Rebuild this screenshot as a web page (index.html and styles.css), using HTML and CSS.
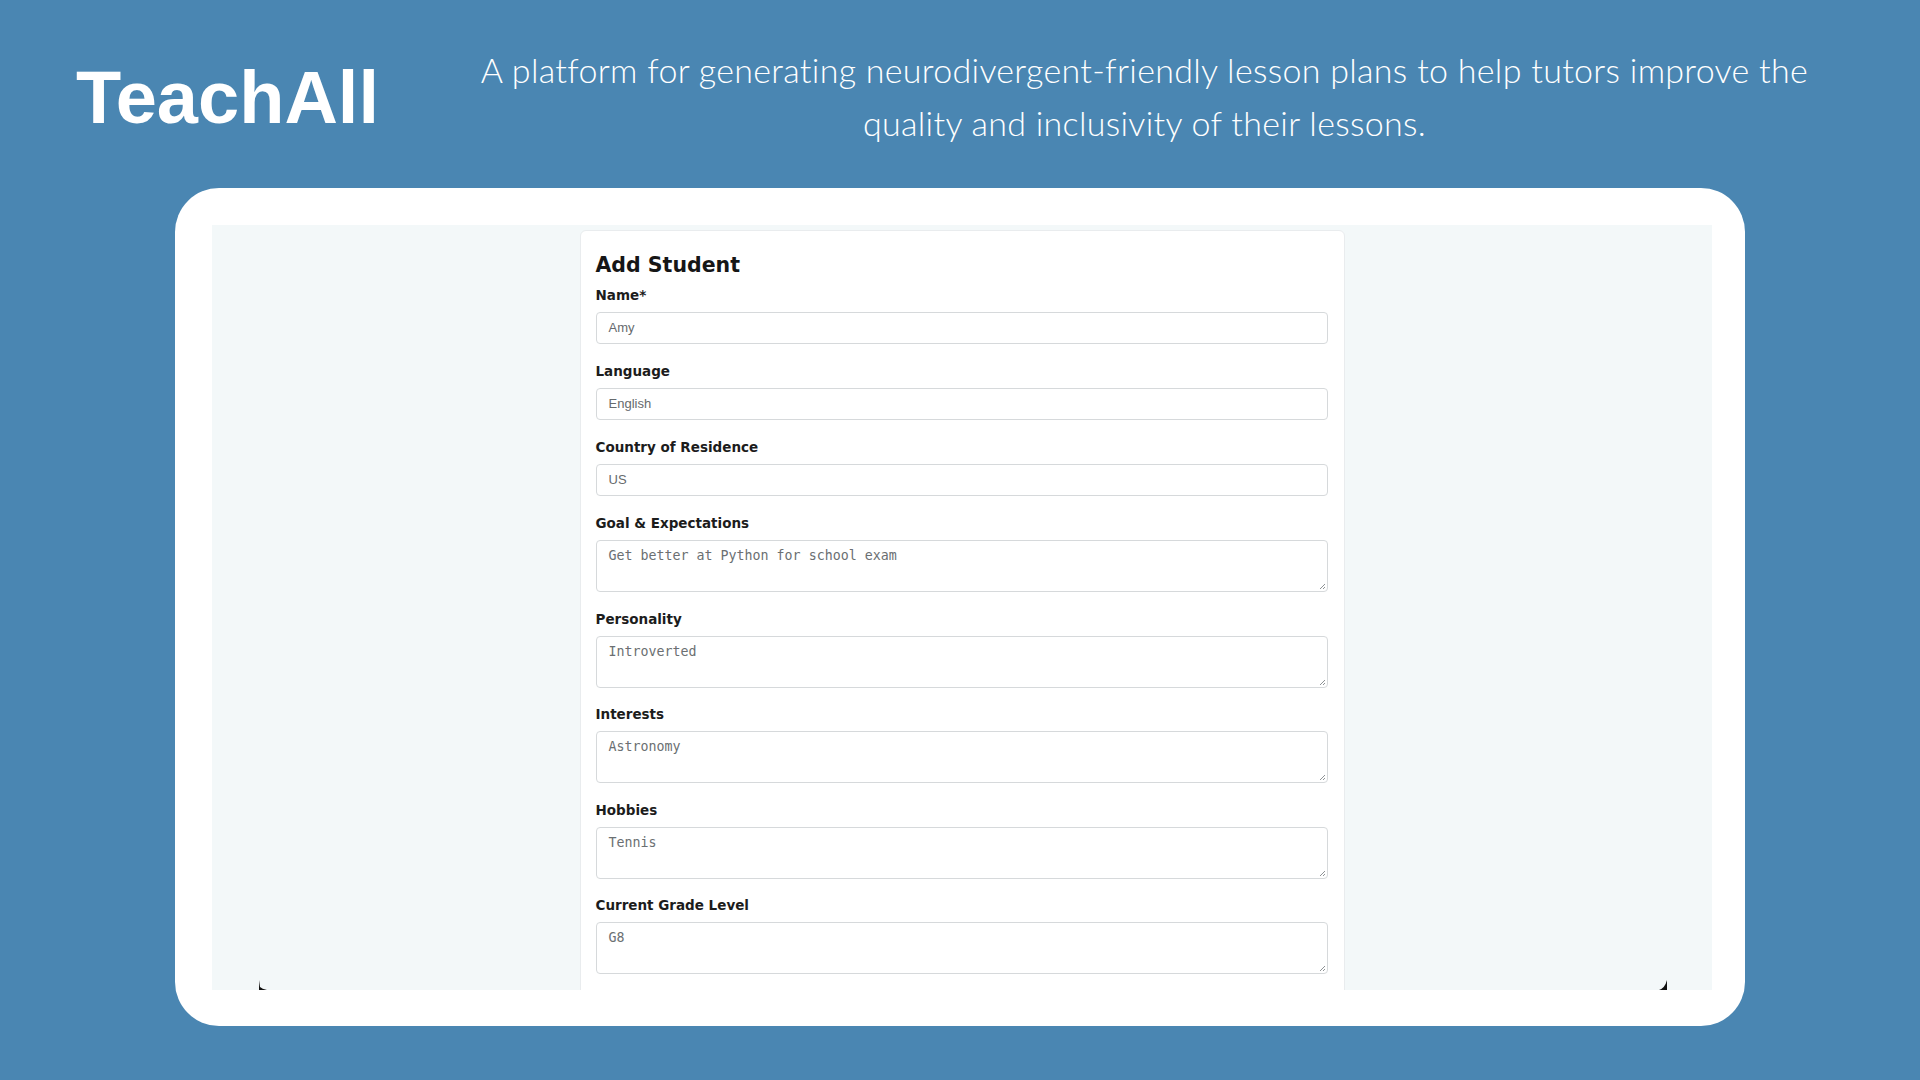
FILE: index.html
```html
<!DOCTYPE html>
<html lang="en">
<head>
<meta charset="utf-8">
<title>TeachAll</title>
<link rel="stylesheet" href="styles.css">
</head>
<body>
<header class="hero">
  <h1 class="brand">TeachAll</h1>
  <p class="tagline">A platform for generating neurodivergent-friendly lesson plans to help tutors improve the<br>quality and inclusivity of their lessons.</p>
</header>
<main class="card">
  <div class="screen">
    <section class="panel">
      <h2 class="panel-title">Add Student</h2>
      <div class="field">
        <div class="label">Name*</div>
        <div class="input">Amy</div>
      </div>
      <div class="field">
        <div class="label">Language</div>
        <div class="input">English</div>
      </div>
      <div class="field">
        <div class="label">Country of Residence</div>
        <div class="input">US</div>
      </div>
      <div class="field">
        <div class="label">Goal &amp; Expectations</div>
        <div class="textarea">Get better at Python for school exam<svg class="grip" viewBox="0 0 8 8"><path d="M7 2L2 7M7 5L5 7"/></svg></div>
      </div>
      <div class="field">
        <div class="label">Personality</div>
        <div class="textarea">Introverted<svg class="grip" viewBox="0 0 8 8"><path d="M7 2L2 7M7 5L5 7"/></svg></div>
      </div>
      <div class="field">
        <div class="label">Interests</div>
        <div class="textarea">Astronomy<svg class="grip" viewBox="0 0 8 8"><path d="M7 2L2 7M7 5L5 7"/></svg></div>
      </div>
      <div class="field">
        <div class="label">Hobbies</div>
        <div class="textarea">Tennis<svg class="grip" viewBox="0 0 8 8"><path d="M7 2L2 7M7 5L5 7"/></svg></div>
      </div>
      <div class="field">
        <div class="label">Current Grade Level</div>
        <div class="textarea">G8<svg class="grip" viewBox="0 0 8 8"><path d="M7 2L2 7M7 5L5 7"/></svg></div>
      </div>
    </section>
    <svg class="mark mark-left" viewBox="0 0 10 10"><path d="M1 0 L2 7 Q4 9 9 10 L1 10 Z"/></svg>
    <svg class="mark mark-right" viewBox="0 0 10 10"><path d="M9 0 L9 10 L1 10 Q7 8 9 0 Z"/></svg>
  </div>
</main>
</body>
</html>
```
FILE: styles.css
```css
* { box-sizing: border-box; }
html, body { margin: 0; padding: 0; }
body {
  width: 1920px;
  height: 1080px;
  background: #4a86b2;
  overflow: hidden;
}
.hero {
  display: flex;
  align-items: flex-start;
  height: 188px;
  padding: 43px 88px 0 76px;
}
.brand {
  margin: 18px 0 0 0;
  font-family: "Liberation Sans", Arial, sans-serif;
  font-weight: 700;
  font-size: 74px;
  line-height: 74px;
  letter-spacing: 0;
  color: #ffffff;
  white-space: nowrap;
}
.tagline {
  flex: 1;
  margin: 0 0 0 78px;
  font-family: "Lato", "Open Sans", sans-serif;
  font-weight: 300;
  font-size: 34px;
  line-height: 53px;
  letter-spacing: 0.3px;
  color: #ffffff;
  text-align: center;
  white-space: nowrap;
}
.card {
  width: 1570px;
  height: 838px;
  margin: 0 auto;
  background: #ffffff;
  border-radius: 44px;
  padding: 37px 33px 36px 37px;
}
.screen {
  position: relative;
  height: 765px;
  background: #f3f8f9;
  overflow: hidden;
  display: flex;
  justify-content: center;
  padding-top: 5px;
}
.panel {
  width: 765px;
  height: 900px;
  background: #ffffff;
  border: 1px solid #e9ecee;
  border-radius: 6px;
  padding: 22px 16px 0 15px;
}
.panel-title {
  margin: 0 0 8px 0;
  font-family: "DejaVu Sans", Verdana, sans-serif;
  font-weight: 700;
  font-size: 20.5px;
  line-height: 24px;
  color: #161616;
}
.field { margin-bottom: 17px; }
.field:nth-child(n+5) { margin-bottom: 16.6px; }
.label {
  font-family: "DejaVu Sans", Verdana, sans-serif;
  font-weight: 700;
  font-size: 13.5px;
  line-height: 20px;
  color: #1c1c1c;
  margin-bottom: 7px;
}
.input {
  height: 32px;
  border: 1px solid #d6d9db;
  border-radius: 4px;
  padding: 0 12px;
  font-family: "Liberation Sans", Arial, sans-serif;
  font-size: 13px;
  line-height: 30px;
  color: #666a6d;
}
.textarea {
  position: relative;
  height: 52px;
  border: 1px solid #d6d9db;
  border-radius: 4px;
  padding: 6px 12px;
  font-family: "DejaVu Sans Mono", "Liberation Mono", monospace;
  font-size: 13.3px;
  line-height: 18px;
  color: #6b6f72;
}
.grip {
  position: absolute;
  right: 1px;
  bottom: 1px;
  width: 8px;
  height: 8px;
  fill: none;
  stroke: #8f9396;
  stroke-width: 1;
}
.mark {
  position: absolute;
  width: 10px;
  height: 10px;
  fill: #111111;
}
.mark-left { left: 46px; bottom: 0; }
.mark-right { right: 44px; bottom: 0; }
```
